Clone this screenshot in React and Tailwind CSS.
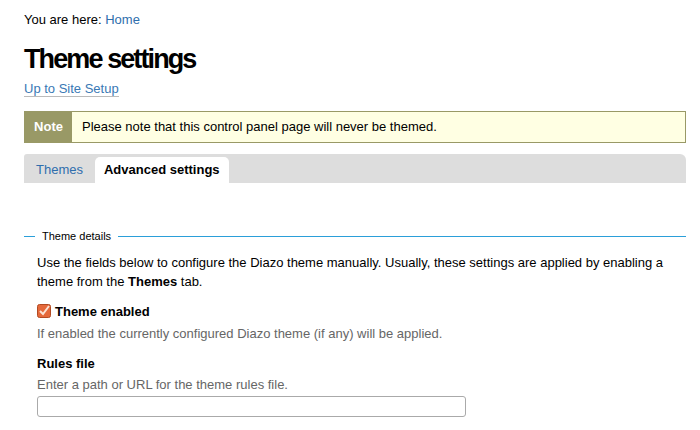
import React from 'react';

const CheckIcon = () => (
  <svg width="14" height="14" viewBox="0 0 14 14" className="shrink-0">
    <rect x="0.5" y="0.5" width="13" height="13" rx="2" fill="#e5693b" stroke="#b24a22" />
    <path d="M3 7 L6 10 L12 2" fill="none" stroke="#fbe3d6" strokeWidth="2" />
  </svg>
);

const App = () => {
  return (
    <div className="min-h-[430px] bg-white text-[13px] text-black pl-6 pr-[14px] pt-[12px] font-['Liberation_Sans',Arial,sans-serif]">
      {/* breadcrumbs */}
      <div className="leading-[15px]">
        You are here: <a className="text-[#2f6ead]">Home</a>
      </div>

      <h1 className="text-[27px] font-bold leading-[32px] mt-[16px] tracking-[-1.9px]">Theme settings</h1>

      <div className="mt-[4px]">
        <a className="text-[#3a79b5] border-b border-[#bbbbbb] leading-[15px]">Up to Site Setup</a>
      </div>

      {/* note */}
      <div className="mt-[12px] flex border border-[#999966] bg-[#ffffe3] h-[32px] items-stretch">
        <div className="bg-[#999966] text-white font-bold w-[47px] flex items-center justify-center">Note</div>
        <div className="flex items-center pl-[10px]">Please note that this control panel page will never be themed.</div>
      </div>

      {/* tabs */}
      <div className="mt-[11px] bg-[#dddddd] h-[29px] rounded-tr-[6px] rounded-tl-[3px] flex items-end pl-[12px] gap-[12px]">
        <a className="text-[#2f6ead] h-[26px] flex items-center">Themes</a>
        <div className="bg-white font-bold rounded-t-[5px] h-[26px] px-[9px] flex items-center">Advanced settings</div>
      </div>

      {/* fieldset */}
      <div className="mt-[47px] flex items-center gap-[7px]">
        <div className="w-[11px] border-t border-[#2b9fd9]" />
        <span className="text-[11px] leading-[13px]">Theme details</span>
        <div className="flex-1 border-t border-[#2b9fd9]" />
      </div>

      <div className="pl-[13px]">
        <p className="mt-[10px] leading-[19px]">
          Use the fields below to configure the Diazo theme manually. Usually, these settings are applied by enabling a theme from the <b>Themes</b> tab.
        </p>

        <div className="mt-[11px] flex items-center gap-[4px]">
          <CheckIcon />
          <span className="font-bold">Theme enabled</span>
        </div>
        <div className="text-[#666666] mt-[5px] leading-[15px]">
          If enabled the currently configured Diazo theme (if any) will be applied.
        </div>

        <div className="font-bold mt-[15px] leading-[15px]">Rules file</div>
        <div className="text-[#666666] mt-[6px] leading-[15px]">Enter a path or URL for the theme rules file.</div>
        <input className="mt-[4px] block w-[429px] h-[21px] border border-[#aaaaaa] rounded-[3px] outline-none" />
      </div>
    </div>
  );
};

export default App;
